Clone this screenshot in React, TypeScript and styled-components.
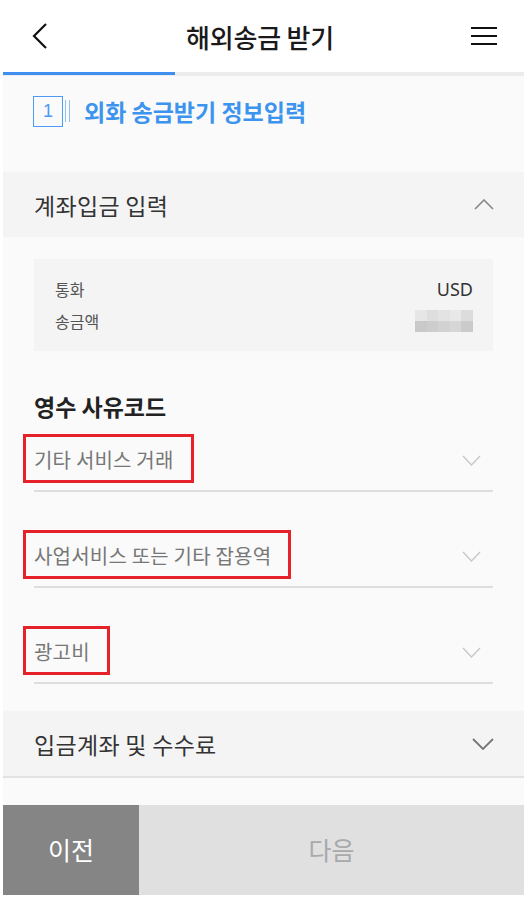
import React from "react";
import styled, { createGlobalStyle } from "styled-components";

const GlobalStyle = createGlobalStyle`
  html, body {
    margin: 0;
    padding: 0;
    background: #ffffff;
  }
  body {
    font-family: "Noto Sans CJK KR", "Noto Sans", sans-serif;
    color: #222;
  }
  * { box-sizing: border-box; }
`;

const Screen = styled.div`
  margin: 0 4px 0 3px;
  background: #fafafa;
  display: flex;
  flex-direction: column;
`;

const Header = styled.header`
  height: 72px;
  display: flex;
  align-items: center;
  justify-content: space-between;
  padding: 0 25px 0 22px;
  background: #ffffff;
`;

const IconButton = styled.button`
  width: 30px;
  height: 30px;
  padding: 0;
  border: 0;
  background: transparent;
  display: flex;
  align-items: center;
  justify-content: center;
`;

const Title = styled.h1`
  margin: 0 4px 0 0;
  font-size: 26px;
  font-weight: 500;
  color: #1a1a1a;
  letter-spacing: -0.2px;
`;

const Progress = styled.div`
  height: 4px;
  background: #ececec;
  display: flex;
`;

const ProgressFill = styled.div`
  height: 3px;
  background: #3f8ff0;
`;

const StepRow = styled.div`
  display: flex;
  align-items: center;
  padding: 14px 30px 0 30px;
  height: 56px;
`;

const StepBox = styled.span`
  width: 30px;
  height: 31px;
  border: 1.5px solid #4d9bf2;
  color: #4d9bf2;
  font-family: "Liberation Sans", sans-serif;
  font-size: 18px;
  display: flex;
  align-items: center;
  justify-content: center;
`;

const StepBars = styled.span`
  width: 5px;
  height: 22px;
  margin-left: 2px;
  border-left: 1px solid #8fc0f5;
  border-right: 1px solid #8fc0f5;
`;

const StepText = styled.span`
  margin-left: 14px;
  font-size: 23px;
  font-weight: 700;
  color: #3d94ee;
  letter-spacing: 0;
`;

const SectionHeader = styled.div<{ $top: number; $border?: boolean }>`
  margin-top: ${(p) => p.$top}px;
  height: ${(p) => (p.$border ? 67 : 65)}px;
  background: #f4f4f4;
  display: flex;
  align-items: center;
  justify-content: space-between;
  padding: 0 30px 0 31px;
  border-bottom: ${(p) => (p.$border ? "2px solid #e2e2e2" : "0")};
`;

const SectionTitle = styled.span`
  font-size: 23px;
  color: #333;
  letter-spacing: 0.3px;
`;

const Content = styled.div`
  padding: 22px 31px 0 31px;
  display: flex;
  flex-direction: column;
`;

const InfoBox = styled.div`
  height: 92px;
  background: #f4f4f4;
  padding: 0 20px 0 21px;
  display: flex;
  flex-direction: column;
  justify-content: center;
  gap: 4px;
`;

const InfoRow = styled.div`
  display: flex;
  align-items: center;
  justify-content: space-between;
  height: 28px;
`;

const InfoLabel = styled.span`
  font-size: 16px;
  color: #555;
`;

const InfoValue = styled.span`
  font-family: "Noto Sans", sans-serif;
  font-size: 18px;
  color: #333;
`;

const Blurred = styled.span`
  width: 58px;
  height: 22px;
  display: grid;
  grid-template-columns: repeat(5, 1fr);
  grid-template-rows: 1fr 1fr;
`;

const Pixel = styled.span<{ $c: string }>`
  background: ${(p) => p.$c};
`;

const FieldTitle = styled.h2`
  margin: 40px 0 0 0;
  height: 30px;
  line-height: 30px;
  font-size: 23px;
  font-weight: 700;
  color: #222;
`;

const Field = styled.div<{ $top: number }>`
  margin-top: ${(p) => p.$top}px;
  display: flex;
  align-items: center;
  justify-content: space-between;
  padding: 0 12px 16px 0;
  border-bottom: 2px solid #dedede;
`;

const FieldText = styled.span`
  position: relative;
  display: inline-block;
  height: 28px;
  line-height: 28px;
  font-size: 20px;
  letter-spacing: 0.2px;
  color: #777;
`;

const Mark = styled.span`
  position: absolute;
  top: -12px;
  bottom: -9px;
  left: -11px;
  right: -20px;
  border: 3px solid #e5222a;
  pointer-events: none;
`;

const Spacer = styled.div`
  height: 27px;
`;

const ButtonBar = styled.div`
  display: grid;
  grid-template-columns: 136px 1fr;
  height: 90px;
`;

const NavButton = styled.button<{ $primary?: boolean }>`
  border: 0;
  margin: 0;
  font-family: "Noto Sans CJK KR", sans-serif;
  font-size: 25px;
  background: ${(p) => (p.$primary ? "#858585" : "#e0e0e0")};
  color: ${(p) => (p.$primary ? "#ffffff" : "#a9a9a9")};
  display: flex;
  align-items: center;
  justify-content: center;
  padding-bottom: 4px;
`;

const Chevron: React.FC<{ dir: "up" | "down"; color: string; w: number; h: number; sw: number }> = ({ dir, color, w, h, sw }) => (
  <svg width={w + 2} height={h + 2} viewBox={`-1 -1 ${w + 2} ${h + 2}`} fill="none">
    {dir === "up" ? (
      <polyline points={`0,${h} ${w / 2},0 ${w},${h}`} stroke={color} strokeWidth={sw} />
    ) : (
      <polyline points={`0,0 ${w / 2},${h} ${w},0`} stroke={color} strokeWidth={sw} />
    )}
  </svg>
);

const pixels = [
  "#e6e6e6", "#dedede", "#e3e3e3", "#e8e8e8", "#dcdcdc",
  "#c9c9c9", "#cdcdcd", "#d2d2d2", "#d6d6d6", "#cbcbcb",
];

export default function App() {
  return (
    <>
      <GlobalStyle />
      <Screen>
        <Header>
          <IconButton aria-label="back">
            <svg width="16" height="26" viewBox="0 0 16 26" fill="none">
              <polyline points="14,1 2,13 14,25" stroke="#111" strokeWidth="2.2" />
            </svg>
          </IconButton>
          <Title>해외송금 받기</Title>
          <IconButton aria-label="menu">
            <svg width="28" height="20" viewBox="0 0 28 20" fill="none">
              <line x1="1" y1="2" x2="27" y2="2" stroke="#111" strokeWidth="2" />
              <line x1="1" y1="10" x2="27" y2="10" stroke="#111" strokeWidth="2" />
              <line x1="1" y1="18" x2="27" y2="18" stroke="#111" strokeWidth="2" />
            </svg>
          </IconButton>
        </Header>
        <Progress>
          <ProgressFill style={{ width: "33%" }} />
        </Progress>
        <StepRow>
          <StepBox>1</StepBox>
          <StepBars />
          <StepText>외화 송금받기 정보입력</StepText>
        </StepRow>

        <SectionHeader $top={40}>
          <SectionTitle>계좌입금 입력</SectionTitle>
          <Chevron dir="up" color="#888" w={18} h={9} sw={1.6} />
        </SectionHeader>

        <Content>
          <InfoBox>
            <InfoRow>
              <InfoLabel>통화</InfoLabel>
              <InfoValue>USD</InfoValue>
            </InfoRow>
            <InfoRow>
              <InfoLabel>송금액</InfoLabel>
              <Blurred>
                {pixels.map((c, i) => (
                  <Pixel key={i} $c={c} />
                ))}
              </Blurred>
            </InfoRow>
          </InfoBox>

          <FieldTitle>영수 사유코드</FieldTitle>

          <Field $top={25}>
            <FieldText>
              기타 서비스 거래
              <Mark />
            </FieldText>
            <Chevron dir="down" color="#c8c8c8" w={17} h={9} sw={1.4} />
          </Field>
          <Field $top={50}>
            <FieldText>
              사업서비스 또는 기타 잡용역
              <Mark />
            </FieldText>
            <Chevron dir="down" color="#c8c8c8" w={17} h={9} sw={1.4} />
          </Field>
          <Field $top={50}>
            <FieldText>
              광고비
              <Mark />
            </FieldText>
            <Chevron dir="down" color="#c8c8c8" w={17} h={9} sw={1.4} />
          </Field>
        </Content>

        <SectionHeader $top={27} $border>
          <SectionTitle>입금계좌 및 수수료</SectionTitle>
          <Chevron dir="down" color="#777" w={20} h={10} sw={1.8} />
        </SectionHeader>
        <Spacer />
        <ButtonBar>
          <NavButton $primary>이전</NavButton>
          <NavButton>다음</NavButton>
        </ButtonBar>
      </Screen>
    </>
  );
}
